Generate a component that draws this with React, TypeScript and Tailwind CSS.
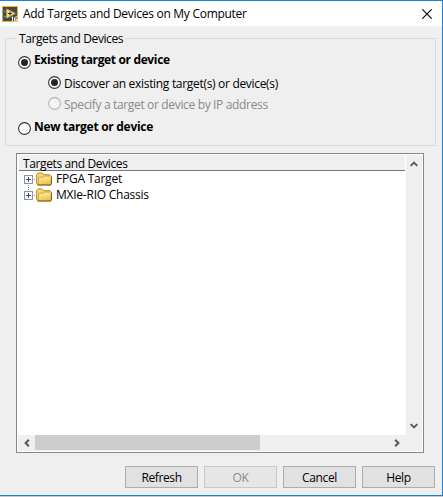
import type { ReactNode } from "react";

function AppIcon() {
  return (
    <svg width="16" height="16" viewBox="0 0 16 16" className="shrink-0">
      <rect width="16" height="16" fill="#f5b81c" />
      <rect x="1" y="1" width="14" height="14" fill="#44484e" />
      <path d="M0 5.5h5M0 10.5h5M12 7.5h4" stroke="#3a8cc4" strokeWidth="1.4" />
      <path d="M4.8 3L13 7.5L4.8 12Z" fill="#f8e3a0" stroke="#e5ae2c" strokeWidth="1" />
      <path d="M6 7.5h4M8 5.5v4" stroke="#33302a" strokeWidth="1" />
      <path d="M10.5 10.5v5M9.5 11.5h1M15 10.8h-1.5l-1 1.2v3h2.5v-2h-2" stroke="#fff" strokeWidth="0.9" fill="none" />
    </svg>
  );
}

function Radio({ checked = false, disabled = false }: { checked?: boolean; disabled?: boolean }) {
  const ring = disabled ? "#b4b4b4" : "#333333";
  return (
    <svg width="13" height="13" viewBox="0 0 13 13" className="shrink-0">
      <circle cx="6.5" cy="6.5" r="5.9" fill={disabled ? "#f4f4f4" : "#fff"} stroke={ring} strokeWidth="1.1" />
      {checked && <circle cx="6.5" cy="6.5" r="3.5" fill="#262626" />}
    </svg>
  );
}

function Folder() {
  return (
    <svg width="16" height="14" viewBox="0 0 16 14" className="shrink-0">
      <defs>
        <linearGradient id="folder" x1="0" y1="0" x2="0.4" y2="1">
          <stop offset="0" stopColor="#fff3b0" />
          <stop offset="1" stopColor="#efc548" />
        </linearGradient>
      </defs>
      <path d="M0.6 11.5V2.6L2 1h4l1.4 1.7H13.5L14.6 4v8.5H1.5Z" fill="#f6d873" stroke="#bd8a20" />
      <path d="M2.8 5.2H7L8.2 4H15.4V11.5L14.3 12.5H2Z" fill="url(#folder)" stroke="#c3932c" strokeWidth="0.8" />
      <path d="M1.5 13.2h13.2L15.5 12V5" stroke="#74571c" fill="none" strokeWidth="0.9" />
    </svg>
  );
}

function Expander({ last = false }: { last?: boolean }) {
  return (
    <svg width="12" height="16" viewBox="0 0 12 16" className="shrink-0" shapeRendering="crispEdges">
      <path d={last ? "M4.5 0v4" : "M4.5 14v2"} stroke="#777" strokeDasharray="1 1" />
      <rect x="0.5" y="4.5" width="8" height="8" fill="#fff" stroke="#929292" />
      <path d="M2 8.5h5M4.5 6v5" stroke="#2b4a9b" />
      <path d="M10 8.5h1" stroke="#777" />
    </svg>
  );
}

function TreeItem({ children, last }: { children: ReactNode; last?: boolean }) {
  return (
    <div className="flex h-4 items-center pl-[5px]">
      <Expander last={last} />
      <Folder />
      <span className="ml-1 leading-4">{children}</span>
    </div>
  );
}

function Chevron({ turn }: { turn: string }) {
  return (
    <svg width="8" height="8" viewBox="0 0 8 8" className={turn}>
      <path d="M0.7 5.9L4 2.6L7.3 5.9" fill="none" stroke="#5a5a5a" strokeWidth="2" />
    </svg>
  );
}

function Button({ children, disabled }: { children: ReactNode; disabled?: boolean }) {
  return (
    <button
      disabled={disabled}
      className="h-[22px] w-[73px] border border-[#adadad] bg-[#e1e1e1] pt-px text-center leading-[20px] disabled:border-[#c8c8c8] disabled:bg-[#e6e6e6] disabled:text-[#8a8a8a]"
    >
      {children}
    </button>
  );
}

export default function App() {
  return (
    <div className="h-[497px] w-[443px] overflow-hidden bg-[#c9c9c9] font-['Open_Sans','Noto_Sans',sans-serif] text-[12px] whitespace-nowrap text-black">
      <div className="flex h-[496px] flex-col border-t border-r border-b border-[#1883d7] bg-[#efefef]">
        <header className="flex h-[25px] shrink-0 items-center bg-white pl-[2px]">
          <AppIcon />
          <h1 className="ml-[5px] tracking-[-0.28px]">Add Targets and Devices on My Computer</h1>
          <svg width="10" height="10" viewBox="0 0 10 10" className="mr-[10px] ml-auto">
            <path d="M0.3 0.3L9.7 9.7M9.7 0.3L0.3 9.7" stroke="#000" strokeWidth="1.1" />
          </svg>
        </header>

        <fieldset className="mt-[4px] mr-[6px] ml-[5px] h-[116px] shrink-0 border border-[#d9d9d9] pl-[12px]">
          <legend className="-ml-[2px] h-4 pr-[2px] pl-[3px] pt-px leading-4 tracking-[-0.4px]">Targets and Devices</legend>
          <div className="flex h-[26px] items-start">
            <div className="pt-[10px]"><Radio checked /></div>
            <b className="mt-[7px] ml-[3px] leading-[14px] tracking-[-0.35px]">Existing target or device</b>
          </div>
          <div className="ml-[30px] flex h-[21px] items-center">
            <Radio checked />
            <span className="ml-[3px] pt-[3px] tracking-[-0.31px]">Discover an existing target(s) or device(s)</span>
          </div>
          <div className="ml-[30px] flex h-[21px] items-center text-[#8a8a8a]">
            <Radio disabled />
            <span className="ml-[3px] pt-[3px] tracking-[-0.34px]">Specify a target or device by IP address</span>
          </div>
          <div className="flex h-[29px] items-center">
            <Radio />
            <b className="ml-[3px] pb-[3px] tracking-[-0.29px]">New target or device</b>
          </div>
        </fieldset>

        <section className="mt-[7px] ml-[16px] grid h-[300px] w-[408px] shrink-0 grid-cols-[388px_16px] grid-rows-[280px_16px] border border-[#828790] bg-white p-px tracking-[-0.24px]">
          <div className="overflow-hidden bg-white">
            <div className="mr-px ml-px h-[16px] border-b border-[#77777b] bg-[#efefef] pt-px pl-[4px] leading-[15px] tracking-[-0.38px]">Targets and Devices</div>
            <div className="pl-px">
              <TreeItem>FPGA Target</TreeItem>
              <TreeItem last>MXIe-RIO Chassis</TreeItem>
            </div>
          </div>
          <div className="flex flex-col items-center justify-between bg-[#efefef] pt-[5px] pb-[5px]">
            <Chevron turn="rotate-0" />
            <Chevron turn="rotate-180" />
          </div>
          <div className="flex items-center bg-[#efefef]">
            <div className="flex w-[17px] justify-center"><Chevron turn="-rotate-90" /></div>
            <div className="h-[15px] w-[225px] self-start bg-[#cdcdcd]" />
            <div className="mr-[5px] ml-auto"><Chevron turn="rotate-90" /></div>
          </div>
          <div className="bg-[#efefef]" />
        </section>

        <footer className="mt-[13px] mr-[7px] flex justify-end gap-[6px] tracking-[-0.38px]">
          <Button>Refresh</Button>
          <Button disabled>OK</Button>
          <Button>Cancel</Button>
          <Button>Help</Button>
        </footer>
      </div>
    </div>
  );
}
